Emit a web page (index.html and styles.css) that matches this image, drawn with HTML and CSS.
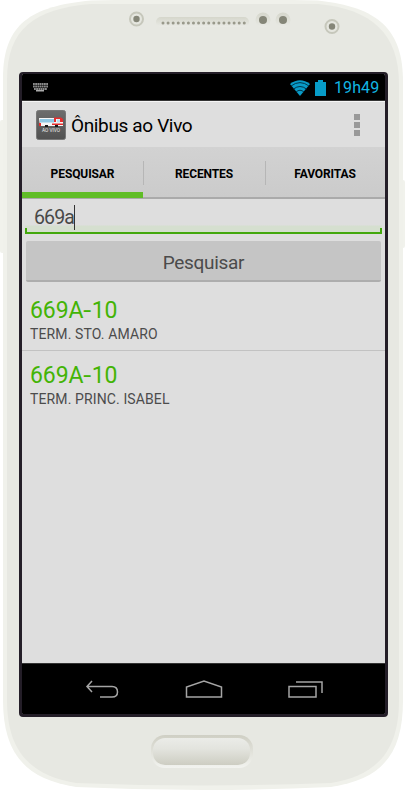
FILE: index.html
```html
<!DOCTYPE html>
<html lang="pt-BR">
<head>
<meta charset="utf-8">
<title>Ônibus ao Vivo</title>
<link rel="stylesheet" href="styles.css">
</head>
<body>
<div class="phone">
  <svg class="shell" viewBox="0 0 406 791" aria-hidden="true">
    <defs>
      <linearGradient id="home" x2="0" y2="1"><stop offset="0" stop-color="#ebece8"/><stop offset=".4" stop-color="#e3e4de"/><stop offset="1" stop-color="#cdcdc2"/></linearGradient>
      <linearGradient id="rim" x2="0" y2="1"><stop offset="0" stop-color="#cfcfc4"/><stop offset="1" stop-color="#f2f3ef"/></linearGradient>
      <linearGradient id="slot" x2="0" y2="1"><stop offset="0" stop-color="#d5d6cb"/><stop offset="1" stop-color="#eaebe6"/></linearGradient>
    </defs>
    <rect x="0" y="120" width="5" height="133" rx="2" fill="#f1f2ec"/>
    <rect x="400" y="180" width="5" height="68" rx="2" fill="#f1f2ec"/>
    <path d="M3 78C3 24 31 6 91 0.500Q203-2 318 0.500C378 7 403 29 403 82V700C403 752 384 779 331 787Q203 793 76 787C24 779 3 752 3 700Z" fill="#f0f1eb"/>
    <path d="M7 80C7 29 34 9 91 4H318C372 9 399 34 399 84V700C399 749 379 775 331 783Q203 788 76 783C28 775 7 749 7 700Z" fill="#e7e8e2"/>
    <g fill="#e5e6df" stroke="#c6c7bb" stroke-width="2"><circle cx="136.500" cy="19" r="6.500"/><circle cx="332" cy="26.500" r="6.500"/></g>
    <g fill="url(#slot)"><rect x="156" y="17" width="93" height="10" rx="5"/><circle cx="263" cy="20" r="7.500"/><circle cx="283" cy="20" r="7.500"/></g>
    <path d="M163 23H245" stroke="#99998b" stroke-width="3" stroke-linecap="round" stroke-dasharray="0 5.080"/>
    <g fill="#858678"><circle cx="136.500" cy="19" r="3.200"/><circle cx="332" cy="26.500" r="3.200"/><circle cx="263" cy="20" r="4"/><circle cx="283" cy="20" r="4"/></g>
    <rect x="151" y="735" width="102" height="33" rx="14" fill="url(#rim)"/>
    <rect x="153" y="738" width="97" height="27" rx="12" fill="url(#home)"/>
  </svg>
  <main class="screen">
    <header class="status">
      <svg class="keyboard" viewBox="0 0 15 9"><path d="M0 1H15M0 3.500H15M1 6H14" stroke="#8a8a8a" stroke-width="1.800" stroke-dasharray="1.800 .4"/><path d="M3 7.700H11" stroke="#aaa" stroke-width="1.500"/></svg>
      <svg class="wifi" viewBox="0 0 20 16"><path d="M0 4Q10-3.500 20 4L10 16Z" fill="#099bc8"/><path d="M1 6Q10-.8 19 6M3.500 9Q10 4 16.500 9M6 12Q10 8.500 14 12" fill="none" stroke="#00364a" stroke-width="1"/></svg>
      <svg class="battery" viewBox="0 0 11 16"><path d="M0 2H3V0H8V2H11V16H0Z" fill="#079cc8"/></svg>
      <time>19h49</time>
    </header>
    <div class="appbar">
      <svg class="appicon" viewBox="0 0 30 30"><defs><linearGradient id="tile" x2="0" y2="1"><stop stop-color="#6d6d6d"/><stop offset="1" stop-color="#515151"/></linearGradient></defs><rect x=".5" y=".5" width="29" height="29" rx="2" fill="url(#tile)" stroke="#777"/><path d="M3 8H25L27 10V16H4Z" fill="#f6f6f6"/><path d="M4 9H18V12.500H4Z" fill="#91c8e4"/><path d="M18 7.500H25L27 9V12H24V9H20V12H18ZM3 13H5V16H3ZM16 13.500H27V15H16Z" fill="#e52d2d"/><path d="M21 9.500H24V12.500H21Z" fill="#b9dff0"/><path d="M9 15h3v2H9ZM19 15h3v2h-3Z" fill="#191919"/><text x="15" y="21.500" text-anchor="middle" textLength="18" lengthAdjust="spacingAndGlyphs">AO VIVO</text></svg>
      <h1>Ônibus ao Vivo</h1>
      <div class="more"><i></i><i></i><i></i></div>
    </div>
    <nav class="tabs"><a class="active"><span>PESQUISAR</span></a><a><span>RECENTES</span></a><a><span>FAVORITAS</span></a></nav>
    <section class="search">
      <div class="field"><span>669a</span><i class="caret"></i></div>
      <button>Pesquisar</button>
    </section>
    <ul class="results">
      <li><strong>669A<b>-</b>10</strong><span>TERM. STO. AMARO</span></li>
      <li><strong>669A<b>-</b>10</strong><span>TERM. PRINC. ISABEL</span></li>
    </ul>
    <footer class="nav">
      <svg viewBox="0 0 34 20"><path d="M7 1L2 6.500L7 12M2 6.500H27Q32.500 6.500 32.500 12Q32.500 17 27 17H15" /></svg>
      <svg class="house" viewBox="0 0 38 20"><path d="M1.500 17V7L19 1L36.500 7V17Z"/></svg>
      <svg class="recent" viewBox="0 0 36 20"><path d="M1 6.500H28V17H1ZM8 2H34V13"/></svg>
    </footer>
  </main>
</div>
</body>
</html>
```
FILE: styles.css
```css
* { box-sizing: border-box; }
body { margin: 0; background: #fff; font-family: Roboto, "Noto Sans", sans-serif; color: #000; }
.phone { position: relative; width: 406px; height: 791px; padding: 72px 0 0 19px; overflow: hidden; }
.shell { position: absolute; inset: 0; width: 406px; height: 791px; }
.screen { position: relative; display: flex; flex-direction: column; width: 369px; height: 645px; border: 3px solid #241e28; border-top-width: 2px; border-radius: 4px; background: #dedede; overflow: hidden; }
svg { display: block; flex: none; }
.status { display: flex; align-items: center; height: 27px; padding: 1px 7px 0 11px; background: #000; border-bottom: 1px solid #333; }
.keyboard { width: 15px; height: 9px; }
.wifi { width: 20px; height: 16px; margin-left: auto; }
.battery { width: 11px; height: 16px; margin: 0 8px 0 5px; }
time { width: 44px; padding-top: 1px; font-size: 16px; line-height: 20px; color: #12b7e4; letter-spacing: .1px; white-space: nowrap; }
.appbar { display: flex; align-items: center; height: 46px; padding: 0 25px 0 14px; border-top: 1px solid #f5f5f5; }
.appicon { width: 30px; height: 30px; margin-top: 1px; }
.appicon text { font-size: 5px; fill: #eee; }
h1 { margin: 3px 0 0 5px; font-size: 19px; line-height: 24px; font-weight: 400; letter-spacing: -.36px; white-space: nowrap; }
.more { display: grid; gap: 2px; margin: 1px 0 0 auto; }
.more i { width: 6px; height: 6px; background: #999; }
.tabs { display: grid; grid-template-columns: 121px 122px 1fr; height: 52px; background: linear-gradient(#d2d2d2, #cbcbcb); border-bottom: 2px solid #aaa; }
.tabs a { position: relative; display: flex; align-items: center; justify-content: center; height: 51px; padding-top: 3px; font-size: 12px; font-weight: 700; letter-spacing: -.1px; }
.tabs a + a::before { content: ""; position: absolute; left: 0; top: 14px; width: 1px; height: 24px; background: #b6b6b6; }
.active { border-bottom: 6px solid #60bd27; }
.tabs .active { padding-top: 9px; }
.search { padding: 0 3px; }
.field { position: relative; display: flex; align-items: center; height: 35px; padding: 4px 9px 0; border-bottom: 2px solid #43a80d; background: linear-gradient(#dedede 26px, #d5dfcf 27px); font-size: 19.500px; letter-spacing: -.85px; color: #484848; }
.field::before, .field::after { content: ""; position: absolute; bottom: 0; width: 2px; height: 4px; background: #43a80d; }
.field::before { left: 0; }
.field::after { right: 0; }
.caret { width: 1px; height: 25px; background: #333; }
button { display: block; width: 355px; height: 41px; margin: 7px 0 0 1px; padding: 3px 0 0; border: 0; border-bottom: 2px solid #adadad; border-radius: 2px; background: #c5c5c5; font: 19px Roboto, sans-serif; letter-spacing: -.3px; color: #4b4b4b; }
.results { flex: 1; margin: 0; padding: 4px 0 0; list-style: none; }
li { height: 65px; padding: 11px 8px 0; }
li:first-child { border-bottom: 1px solid #c2c2c2; }
li strong { display: block; font-size: 23px; line-height: 28px; font-weight: 400; letter-spacing: -.1px; color: #43b405; }
li b { display: inline-block; margin: 0 1px; font-weight: 400; transform: scaleX(1.25); }
li span { display: block; font-size: 14px; line-height: 19px; letter-spacing: .12px; color: #4c4c4c; white-space: nowrap; }
.nav { display: flex; height: 51px; padding: 16px 61px 0 63px; justify-content: space-between; border-top: 1px solid #333; background: #000; }
.nav svg { width: 34px; height: 20px; fill: none; stroke: #a5a5a5; stroke-width: 1.500; }
.nav .house { width: 38px; }
.nav .recent { width: 36px; }
```
